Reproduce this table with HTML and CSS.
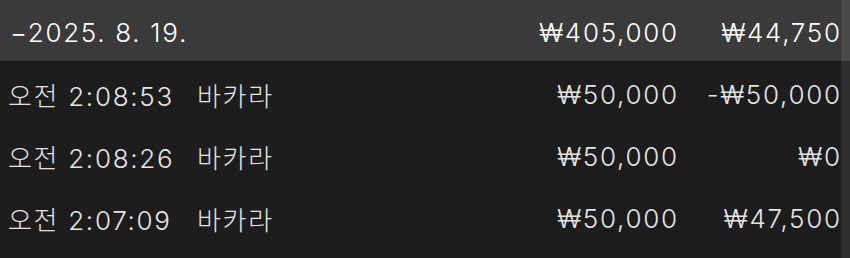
FILE: index.html
```html
<!DOCTYPE html>
<html lang="ko">
<head>
    <meta charset="UTF-8">
    <title>베팅 내역</title>
    <link rel="stylesheet" href="styles.css">
</head>
<body>
    <div class="history">
        <div class="day-header">
            <span class="day-date">−2025. 8. 19.</span>
            <span class="amount">₩405,000</span>
            <span class="result">₩44,750</span>
        </div>

        <div class="rows">
            <div class="row">
                <span class="time">오전 2:08:53</span>
                <span class="game">바카라</span>
                <span class="amount">₩50,000</span>
                <span class="result">-₩50,000</span>
            </div>
            <div class="row">
                <span class="time">오전 2:08:26</span>
                <span class="game">바카라</span>
                <span class="amount">₩50,000</span>
                <span class="result">₩0</span>
            </div>
            <div class="row">
                <span class="time">오전 2:07:09</span>
                <span class="game">바카라</span>
                <span class="amount">₩50,000</span>
                <span class="result">₩47,500</span>
            </div>
        </div>

        <div class="scroll-track"></div>
    </div>
</body>
</html>
```

FILE: styles.css
```css
* {
    margin: 0;
    padding: 0;
    box-sizing: border-box;
}

body {
    font-family: 'Inter', 'Noto Sans CJK KR', sans-serif;
    font-weight: 300;
    background: #1c1c1c;
    color: #e4e4e4;
    width: 850px;
    height: 258px;
    overflow: hidden;
}

.history {
    position: relative;
    height: 258px;
}

.day-header,
.row {
    display: grid;
    grid-template-columns: 189px 1fr 170px 163px;
    align-items: center;
    padding: 0 10px 0 8px;
    font-size: 26px;
    letter-spacing: 0.065em;
}

.day-header {
    height: 61px;
    padding-top: 3px;
    background: #3a3a3a;
    color: #ffffff;
    padding-left: 10px;
    grid-template-columns: 1fr 170px 163px;
}

.rows {
    padding-top: 2px;
}

.row {
    height: 62px;
}

.amount,
.result {
    text-align: right;
    white-space: nowrap;
    margin-right: -0.065em;
}

.time,
.game {
    white-space: nowrap;
}

/* thin scrollbar sitting over the right edge */
.scroll-track {
    position: absolute;
    top: 0;
    right: 0;
    bottom: 0;
    width: 9px;
    background: rgba(255, 255, 255, 0.08);
}
```
